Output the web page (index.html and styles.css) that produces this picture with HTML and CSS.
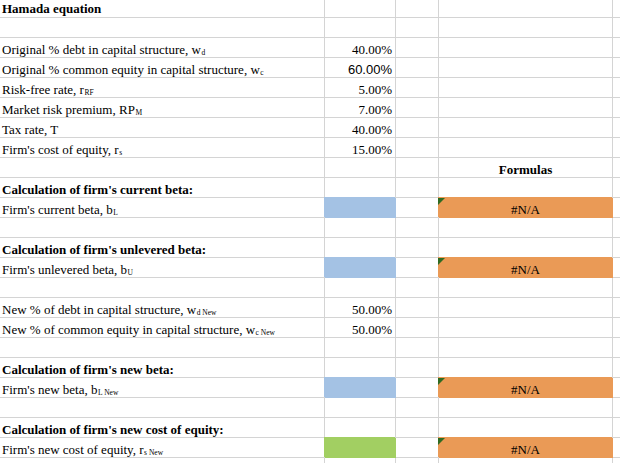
FILE: index.html
```html
<!DOCTYPE html>
<html>
<head>
<meta charset="utf-8">
<link rel="stylesheet" href="styles.css">
</head>
<body>
<div class="sheet">
  <div class="row first"><div class="c b">Hamada equation</div><div class="c"></div><div class="c"></div><div class="c"></div><div class="c e"></div></div>
  <div class="row"><div class="c"></div><div class="c"></div><div class="c"></div><div class="c"></div><div class="c e"></div></div>
  <div class="row"><div class="c">Original % debt in capital structure, w<sub>d</sub></div><div class="c num">40.00%</div><div class="c"></div><div class="c"></div><div class="c e"></div></div>
  <div class="row"><div class="c">Original % common equity in capital structure, w<sub>c</sub></div><div class="c num sans">60.00%</div><div class="c"></div><div class="c"></div><div class="c e"></div></div>
  <div class="row"><div class="c">Risk-free rate, r<sub>RF</sub></div><div class="c num">5.00%</div><div class="c"></div><div class="c"></div><div class="c e"></div></div>
  <div class="row"><div class="c">Market risk premium, RP<sub>M</sub></div><div class="c num">7.00%</div><div class="c"></div><div class="c"></div><div class="c e"></div></div>
  <div class="row"><div class="c">Tax rate, T</div><div class="c num">40.00%</div><div class="c"></div><div class="c"></div><div class="c e"></div></div>
  <div class="row"><div class="c">Firm's cost of equity, r<sub>s</sub></div><div class="c num">15.00%</div><div class="c"></div><div class="c"></div><div class="c e"></div></div>
  <div class="row"><div class="c"></div><div class="c"></div><div class="c"></div><div class="c b mid">Formulas</div><div class="c e"></div></div>
  <div class="row"><div class="c b">Calculation of firm's current beta:</div><div class="c"></div><div class="c"></div><div class="c"></div><div class="c e"></div></div>
  <div class="row"><div class="c">Firm's current beta, b<sub>L</sub></div><div class="c fill blue"></div><div class="c"></div><div class="c fill orange mid">#N/A</div><div class="c e"></div></div>
  <div class="row"><div class="c"></div><div class="c"></div><div class="c"></div><div class="c"></div><div class="c e"></div></div>
  <div class="row"><div class="c b">Calculation of firm's unlevered beta:</div><div class="c"></div><div class="c"></div><div class="c"></div><div class="c e"></div></div>
  <div class="row"><div class="c">Firm's unlevered beta, b<sub>U</sub></div><div class="c fill blue"></div><div class="c"></div><div class="c fill orange mid">#N/A</div><div class="c e"></div></div>
  <div class="row"><div class="c"></div><div class="c"></div><div class="c"></div><div class="c"></div><div class="c e"></div></div>
  <div class="row"><div class="c">New % of debt in capital structure, w<sub>d New</sub></div><div class="c num">50.00%</div><div class="c"></div><div class="c"></div><div class="c e"></div></div>
  <div class="row"><div class="c">New % of common equity in capital structure, w<sub>c New</sub></div><div class="c num">50.00%</div><div class="c"></div><div class="c"></div><div class="c e"></div></div>
  <div class="row"><div class="c"></div><div class="c"></div><div class="c"></div><div class="c"></div><div class="c e"></div></div>
  <div class="row"><div class="c b">Calculation of firm's new beta:</div><div class="c"></div><div class="c"></div><div class="c"></div><div class="c e"></div></div>
  <div class="row"><div class="c">Firm's new beta, b<sub>L New</sub></div><div class="c fill blue"></div><div class="c"></div><div class="c fill orange mid">#N/A</div><div class="c e"></div></div>
  <div class="row"><div class="c"></div><div class="c"></div><div class="c"></div><div class="c"></div><div class="c e"></div></div>
  <div class="row"><div class="c b">Calculation of firm's new cost of equity:</div><div class="c"></div><div class="c"></div><div class="c"></div><div class="c e"></div></div>
  <div class="row"><div class="c">Firm's new cost of equity, r<sub>s New</sub></div><div class="c fill green"></div><div class="c"></div><div class="c fill orange mid">#N/A</div><div class="c e"></div></div>
  <div class="row"><div class="c"></div><div class="c"></div><div class="c"></div><div class="c"></div><div class="c e"></div></div>
</div>
</body>
</html>
```

FILE: styles.css
```css
html, body {
  margin: 0;
  padding: 0;
  background: #ffffff;
  overflow: hidden;
}

.sheet {
  font-family: "Liberation Serif", "Times New Roman", serif;
  font-size: 13px;
  color: #000000;
  width: 620px;
}

.row {
  display: grid;
  grid-template-columns: 325px 71px 43px 174px 1fr;
  height: 20px;
}

.row.first {
  height: 18px;
}

.c {
  box-sizing: border-box;
  border-right: 1px solid #d4d4d4;
  border-bottom: 1px solid #d4d4d4;
  padding: 4px 0 0 2px;
  line-height: 15px;
  white-space: nowrap;
  position: relative;
}

.row.first .c {
  padding-top: 1px;
}

.c.e {
  border-right: none;
}

.b {
  font-weight: bold;
}

.num {
  text-align: right;
  padding-right: 3px;
}

.sans {
  font-family: "Liberation Sans", Arial, sans-serif;
}

.mid {
  text-align: center;
  padding-left: 0;
}

sub {
  font-size: 7.5px;
  vertical-align: -1px;
  line-height: 0;
  margin-left: 0.5px;
}

.fill.blue {
  background: #a4c2e4;
  border-color: #a4c2e4;
  box-shadow: -1px -1px 0 0 #a4c2e4;
}

.fill.green {
  background: #a2cf62;
  border-color: #a2cf62;
  box-shadow: -1px -1px 0 0 #a2cf62;
}

.fill.orange {
  background: #ea9a56;
  border-color: #ea9a56;
  box-shadow: -1px -1px 0 0 #ea9a56;
}

.fill.orange::before {
  content: "";
  position: absolute;
  left: -1px;
  top: 0;
  width: 0;
  height: 0;
  border-top: 7px solid #2f6b22;
  border-right: 7px solid transparent;
}
```
